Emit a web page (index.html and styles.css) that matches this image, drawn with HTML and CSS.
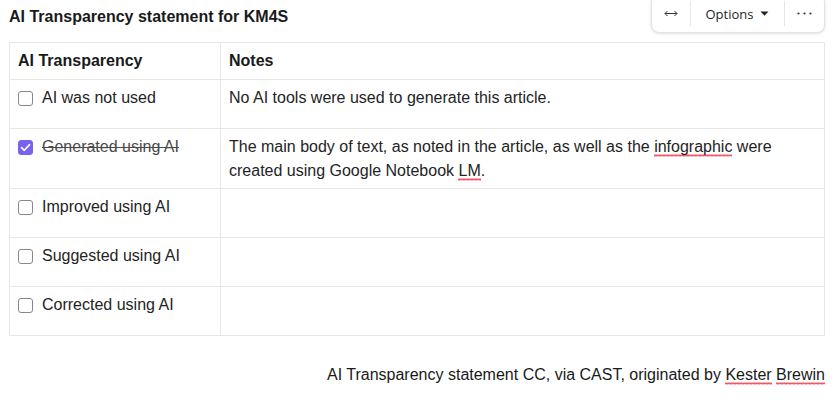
FILE: index.html
```html
<!DOCTYPE html>
<html lang="en">
<head>
<meta charset="utf-8">
<title>AI Transparency statement for KM4S</title>
<link rel="stylesheet" href="styles.css">
</head>
<body>
<div class="page">
  <div class="toolbar">
    <button class="tb-btn tb-width" aria-label="Width">
      <svg width="14" height="7" viewBox="0 0 14 7"><path d="M1 3.5h12M3.5 1L1 3.5 3.5 6M10.5 1L13 3.5 10.5 6" fill="none" stroke="#333" stroke-width="1"/></svg>
    </button>
    <span class="tb-sep"></span>
    <button class="tb-btn tb-options">Options
      <svg width="9" height="5" viewBox="0 0 9 5"><path d="M0.5 0.5h8L4.5 4.8z" fill="#242424"/></svg>
    </button>
    <span class="tb-sep"></span>
    <button class="tb-btn tb-more" aria-label="More">
      <svg width="15" height="3" viewBox="0 0 15 3"><circle cx="1.5" cy="1.5" r="1.1" fill="#333"/><circle cx="7.5" cy="1.5" r="1.1" fill="#333"/><circle cx="13.5" cy="1.5" r="1.1" fill="#333"/></svg>
    </button>
  </div>

  <h1 class="title">AI Transparency statement for KM4S</h1>

  <table class="ai-table">
    <thead>
      <tr><th class="col-a">AI Transparency</th><th>Notes</th></tr>
    </thead>
    <tbody>
      <tr>
        <td><span class="item"><span class="check"></span>AI was not used</span></td>
        <td>No AI tools were used to generate this article.</td>
      </tr>
      <tr class="tall">
        <td><span class="item done"><span class="check checked"><svg width="11" height="9" viewBox="0 0 11 9"><path d="M1.5 4.6l2.8 2.7L9.6 1.6" fill="none" stroke="#fff" stroke-width="1.6" stroke-linecap="round" stroke-linejoin="round"/></svg></span><span class="strike">Generated using AI</span></span></td>
        <td>The main body of text, as noted in the article, as well as the <span class="spell">infographic</span> were created using Google Notebook <span class="spell">LM</span>.</td>
      </tr>
      <tr>
        <td><span class="item"><span class="check"></span>Improved using AI</span></td>
        <td></td>
      </tr>
      <tr>
        <td><span class="item"><span class="check"></span>Suggested using AI</span></td>
        <td></td>
      </tr>
      <tr>
        <td><span class="item"><span class="check"></span>Corrected using AI</span></td>
        <td></td>
      </tr>
    </tbody>
  </table>

  <p class="credit">AI Transparency statement CC, via CAST, originated by <span class="spell">Kester</span> <span class="spell">Brewin</span></p>
</div>
</body>
</html>
```
FILE: styles.css
```css
html, body {
  margin: 0;
  padding: 0;
  background: #ffffff;
}

body {
  font-family: "Liberation Sans", Arial, sans-serif;
  font-size: 16px;
  line-height: 24px;
  color: #242424;
}

.page {
  position: relative;
  padding: 5px 0 0 9px;
  width: 816px;
}

.title {
  margin: 0 0 13px 0;
  font-size: 16px;
  line-height: 24px;
  font-weight: bold;
  color: #1a1a1a;
}

.toolbar {
  position: absolute;
  top: -6px;
  left: 651px;
  width: 174px;
  height: 39px;
  box-sizing: border-box;
  padding-top: 6px;
  display: flex;
  align-items: stretch;
  background: #fff;
  border: 1px solid #e3e3e3;
  border-radius: 8px;
  box-shadow: 0 1px 3px rgba(0, 0, 0, 0.12);
  font-family: "Open Sans", "Noto Sans", sans-serif;
  font-size: 13px;
  color: #242424;
}

.tb-btn {
  border: 0;
  background: transparent;
  padding: 0;
  margin: 0;
  font: inherit;
  color: inherit;
  display: flex;
  align-items: center;
  justify-content: center;
  height: 25px;
}

.tb-width {
  width: 38px;
}

.tb-options {
  width: 93px;
  gap: 7px;
}

.tb-more {
  flex: 1;
}

.tb-sep {
  width: 1px;
  height: 25px;
  background: #e6e6e6;
}

.ai-table {
  width: 816px;
  border-collapse: collapse;
  table-layout: fixed;
}

.ai-table th,
.ai-table td {
  border: 1px solid #e9e7e4;
  padding: 6px 8px 5px 8px;
  text-align: left;
  vertical-align: top;
}

.ai-table th {
  font-weight: bold;
  height: 25px;
  color: #1a1a1a;
}

.ai-table td {
  height: 37px;
}

.col-a {
  width: 194px;
}

.item {
  display: flex;
  align-items: center;
  gap: 9px;
}

.check {
  width: 15px;
  height: 15px;
  box-sizing: border-box;
  border: 1px solid #8a8886;
  border-radius: 3px;
  background: #fff;
  display: inline-flex;
  align-items: center;
  justify-content: center;
  flex: none;
}

.check.checked {
  background: #7b61f0;
  border-color: #7b61f0;
}

.strike {
  text-decoration: line-through;
  color: #4a4a4a;
}

.spell {
  background-image: url("data:image/svg+xml,%3Csvg xmlns='http://www.w3.org/2000/svg' width='4' height='3'%3E%3Cpath d='M0 2.5L1 0.5 2 2.5 3 0.5 4 2.5' fill='none' stroke='%23e81123' stroke-width='0.7'/%3E%3C/svg%3E");
  background-repeat: repeat-x;
  background-position: 0 100%;
  background-size: 4px 3px;
  padding-bottom: 2px;
}

.credit {
  margin: 27px 0 0 0;
  text-align: right;
  color: #1a1a1a;
}
```
